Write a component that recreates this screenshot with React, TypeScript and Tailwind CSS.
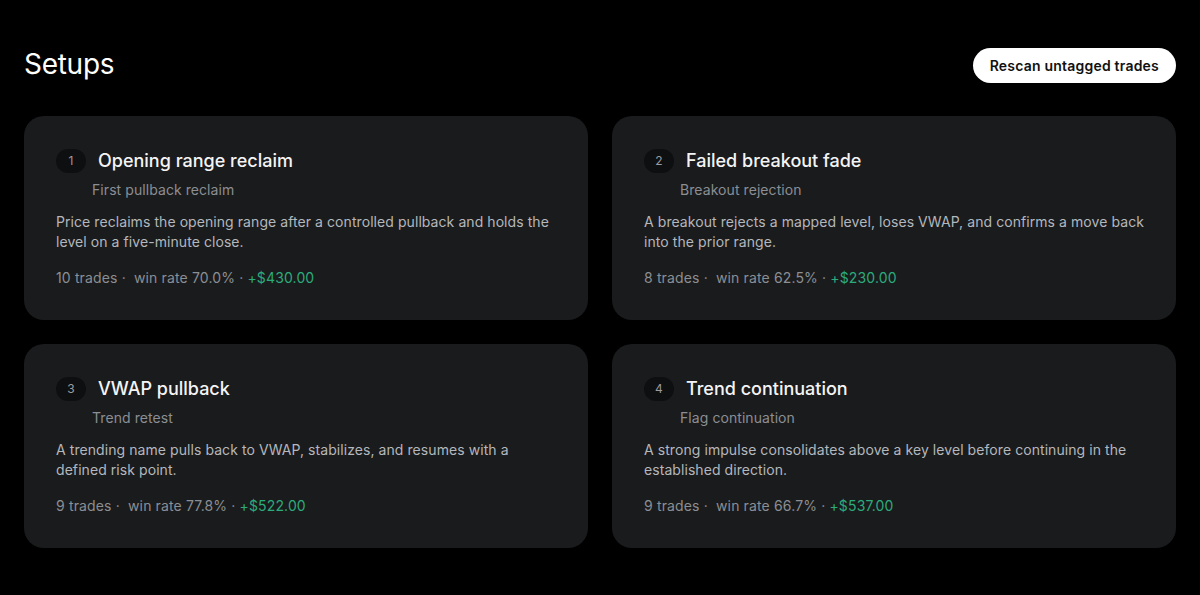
const setups = [
  {
    n: 1,
    title: "Opening range reclaim",
    tag: "First pullback reclaim",
    desc: "Price reclaims the opening range after a controlled pullback and holds the level on a five-minute close.",
    trades: 10,
    winRate: "70.0%",
    pnl: "+$430.00",
  },
  {
    n: 2,
    title: "Failed breakout fade",
    tag: "Breakout rejection",
    desc: "A breakout rejects a mapped level, loses VWAP, and confirms a move back into the prior range.",
    trades: 8,
    winRate: "62.5%",
    pnl: "+$230.00",
  },
  {
    n: 3,
    title: "VWAP pullback",
    tag: "Trend retest",
    desc: "A trending name pulls back to VWAP, stabilizes, and resumes with a defined risk point.",
    trades: 9,
    winRate: "77.8%",
    pnl: "+$522.00",
  },
  {
    n: 4,
    title: "Trend continuation",
    tag: "Flag continuation",
    desc: "A strong impulse consolidates above a key level before continuing in the established direction.",
    trades: 9,
    winRate: "66.7%",
    pnl: "+$537.00",
  },
];

function SetupCard({ s }: { s: (typeof setups)[number] }) {
  return (
    <div className="h-[204px] rounded-[20px] bg-[#1a1b1d] pt-8 pr-7 pb-8 pl-8">
      {/* Header */}
      <div className="flex items-center pt-px">
        <span className="inline-flex h-6 min-w-[30px] items-center justify-center rounded-full bg-[#0e0f10] px-2.5 text-[12px] text-[#9a9ca0]">
          {s.n}
        </span>
        <h3 className="ml-3 text-[18px] font-medium leading-6 text-[#f4f4f5]">
          {s.title}
        </h3>
      </div>
      <p className="mt-[7px] pl-9 text-[14px] leading-5 tracking-[0.005em] text-[#8b8e93]">
        {s.tag}
      </p>
      <p className="mt-3 text-[14px] leading-5 tracking-[0.005em] text-[#b4b7bc]">
        {s.desc}
      </p>
      <p className="mt-4 text-[14px] leading-5 tracking-[0.01em] text-[#8b8e93]">
        {s.trades} trades ·{"\u00a0 "}win rate {s.winRate} ·{" "}
        <span className="text-[#2bab7c]">{s.pnl}</span>
      </p>
    </div>
  );
}

export default function App() {
  return (
    <div
      className="min-h-[595px] bg-black px-6 pt-12 text-white"
      style={{ fontFamily: "Inter, 'Noto Sans', sans-serif" }}
    >
      <div className="flex items-center justify-between">
        <h1 className="-mt-1 text-[28px] font-normal leading-[34px] tracking-[-0.01em] text-white">
          Setups
        </h1>
        <button className="h-[35px] rounded-full bg-white px-[17px] text-[14px] font-semibold tracking-[0.015em] text-[#111]">
          Rescan untagged trades
        </button>
      </div>

      <div className="mt-[33px] grid grid-cols-2 gap-6">
        {setups.map((s) => (
          <SetupCard key={s.n} s={s} />
        ))}
      </div>
    </div>
  );
}
